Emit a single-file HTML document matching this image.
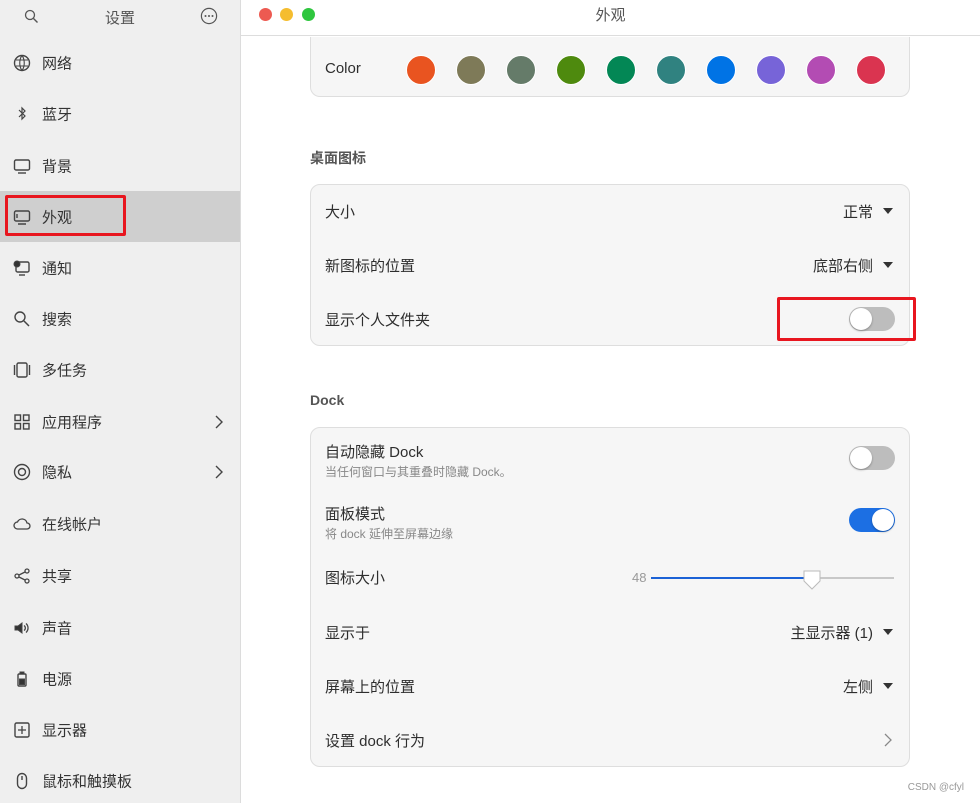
<!DOCTYPE html><html><head><meta charset="utf-8"><style>
*{box-sizing:border-box;margin:0;padding:0}
body{width:980px;height:803px;overflow:hidden;font-family:"Liberation Sans","Noto Sans CJK SC",sans-serif;background:#fff;position:relative;color:#2e2e2e}
.side{position:absolute;left:0;top:0;width:241px;height:803px;background:#efefef;border-right:1px solid #dcdcdc}
.sh{height:36px;position:relative}
.sh .t{position:absolute;left:0;width:240px;top:7px;text-align:center;font-size:15px;color:#555}
.item{position:absolute;left:0;width:240px;height:46px;font-size:15px;color:#333}
.item span{position:absolute;left:42px;top:50%;transform:translateY(-50%)}
.item svg{position:absolute;left:13px;top:50%;transform:translateY(-50%)}
.item .chev{left:auto;right:16px}
.sel{background:#cfcfcf}
.main{position:absolute;left:241px;top:0;right:0;height:803px}
.tb{position:absolute;left:0;top:0;right:0;height:36px;background:#fff;border-bottom:1px solid #ddd;text-align:center;font-size:15px;line-height:32px;color:#555}
.dot{position:absolute;top:8px;width:13px;height:13px;border-radius:50%}
.card{position:absolute;left:310px;width:600px;background:#f6f6f6;border:1px solid #dedede;border-radius:10px}
.row{position:absolute;left:14px;right:14px;font-size:15px;color:#2e2e2e}
.sub{font-size:12px;color:#888;margin-top:1px}
.h{position:absolute;left:310px;font-size:14px;font-weight:bold;color:#555}
.dd{position:absolute;right:16px;font-size:15px}
.dd:after{content:"";display:inline-block;margin-left:10px;border:5px solid transparent;border-top:6px solid #333;border-bottom:0;vertical-align:3px}
.sw{position:absolute;right:14px;width:46px;height:24px;border-radius:12px;background:#bdbdbd}
.sw:before{content:"";position:absolute;left:1px;top:1px;width:22px;height:22px;border-radius:50%;background:#fff;box-shadow:0 1px 2px rgba(0,0,0,.3)}
.sw.on{background:#1c6fe3}.sw.on:before{left:23px}
.c{position:absolute;top:55px;width:30px;height:30px;border-radius:50%;border:1.5px solid #fff}
.red{position:absolute;border:3px solid #e8161f;border-radius:2px}
.item svg *{stroke:#444}
</style></head><body>
<div class="side">
<div class="sh">
<svg style="position:absolute;left:24px;top:9px" width="15" height="15" viewBox="0 0 15 15"><circle cx="6" cy="6" r="4.5" fill="none" stroke="#555" stroke-width="1.3"/><path d="M9.5 9.5L13.5 13.5" stroke="#555" stroke-width="1.4"/></svg>
<div class="t">设置</div>
<svg style="position:absolute;left:200px;top:7px" width="18" height="18" viewBox="0 0 18 18"><circle cx="9" cy="9" r="7.6" fill="none" stroke="#555" stroke-width="1.2"/><circle cx="5.5" cy="9" r="1" fill="#555"/><circle cx="9" cy="9" r="1" fill="#555"/><circle cx="12.5" cy="9" r="1" fill="#555"/></svg>
</div>
<div class="item" style="top:40px"><svg width="18" height="18" viewBox="0 0 18 18"><circle cx="9" cy="9" r="7.5" fill="none" stroke="#333" stroke-width="1.4"/><path d="M3 6h12M3 12h12M9 1.5c-3 4-3 11 0 15M9 1.5c3 4 3 11 0 15" stroke="#333" fill="none" stroke-width="1.1"/></svg><span>网络</span></div>
<div class="item" style="top:91px"><svg width="18" height="18" viewBox="0 0 18 18"><path d="M6 5l6 6-3 3V3l3 3-6 6" fill="none" stroke="#333" stroke-width="1.2"/></svg><span>蓝牙</span></div>
<div class="item" style="top:143px"><svg width="18" height="18" viewBox="0 0 18 18"><rect x="1.5" y="3" width="15" height="10" rx="1.5" fill="none" stroke="#333" stroke-width="1.4"/><path d="M5 16h8" stroke="#333" stroke-width="1.4"/></svg><span>背景</span></div>
<div class="item sel" style="top:191px;height:51px"><svg width="18" height="18" viewBox="0 0 18 18"><rect x="1.5" y="3" width="15" height="10" rx="1.5" fill="none" stroke="#333" stroke-width="1.4"/><path d="M5 16h8M4 6v4" stroke="#333" stroke-width="1.4"/></svg><span>外观</span></div>
<div class="item" style="top:245px"><svg width="18" height="18" viewBox="0 0 18 18"><rect x="3" y="3" width="13" height="10" rx="1.5" fill="none" stroke="#333" stroke-width="1.4"/><circle cx="4" cy="5" r="3" fill="#333"/><path d="M6 16h6" stroke="#333" stroke-width="1.4"/></svg><span>通知</span></div>
<div class="item" style="top:296px"><svg width="18" height="18" viewBox="0 0 18 18"><circle cx="7" cy="7" r="5" fill="none" stroke="#333" stroke-width="1.4"/><path d="M11 11l5 5" stroke="#333" stroke-width="1.5"/></svg><span>搜索</span></div>
<div class="item" style="top:347px"><svg width="18" height="18" viewBox="0 0 18 18"><rect x="4" y="2" width="10" height="14" rx="1.5" fill="none" stroke="#333" stroke-width="1.4"/><path d="M1.5 4v10M16.5 4v10" stroke="#333" stroke-width="1.4"/></svg><span>多任务</span></div>
<div class="item" style="top:399px"><svg width="18" height="18" viewBox="0 0 18 18"><g fill="none" stroke="#333" stroke-width="1.4"><rect x="2" y="2" width="5.5" height="5.5"/><rect x="10.5" y="2" width="5.5" height="5.5"/><rect x="2" y="10.5" width="5.5" height="5.5"/><rect x="10.5" y="10.5" width="5.5" height="5.5"/></g></svg><span>应用程序</span><svg class="chev" width="10" height="14" viewBox="0 0 10 14"><path d="M2 1l6 6-6 6" fill="none" stroke="#444" stroke-width="1.4"/></svg></div>
<div class="item" style="top:449px"><svg width="18" height="18" viewBox="0 0 18 18"><circle cx="9" cy="9" r="7.5" fill="none" stroke="#333" stroke-width="1.4"/><circle cx="9" cy="9" r="3.5" fill="none" stroke="#333" stroke-width="1.4"/></svg><span>隐私</span><svg class="chev" width="10" height="14" viewBox="0 0 10 14"><path d="M2 1l6 6-6 6" fill="none" stroke="#444" stroke-width="1.4"/></svg></div>
<div class="item" style="top:501px"><svg width="18" height="18" viewBox="0 0 18 18"><path d="M4.5 14a3.5 3.5 0 0 1 0-7 5 5 0 0 1 9.5 1 3 3 0 0 1 0 6z" fill="none" stroke="#333" stroke-width="1.3"/></svg><span>在线帐户</span></div>
<div class="item" style="top:553px"><svg width="18" height="18" viewBox="0 0 18 18"><g fill="none" stroke="#333" stroke-width="1.3"><circle cx="4" cy="9" r="2"/><circle cx="14" cy="4" r="2"/><circle cx="14" cy="14" r="2"/><path d="M6 8l6-3M6 10l6 3"/></g></svg><span>共享</span></div>
<div class="item" style="top:605px"><svg width="18" height="18" viewBox="0 0 18 18"><path d="M2 7h3l4-3v10l-4-3H2z" fill="#333"/><path d="M11 6.5a3 3 0 0 1 0 5M13 4.5a6 6 0 0 1 0 9" fill="none" stroke="#333" stroke-width="1.3"/></svg><span>声音</span></div>
<div class="item" style="top:656px"><svg width="18" height="18" viewBox="0 0 18 18"><rect x="5" y="4" width="8" height="12" rx="1" fill="none" stroke="#333" stroke-width="1.4"/><rect x="7" y="2" width="4" height="2" fill="#333"/><rect x="6.5" y="9" width="5" height="5.5" fill="#333"/></svg><span>电源</span></div>
<div class="item" style="top:707px"><svg width="18" height="18" viewBox="0 0 18 18"><rect x="2" y="2" width="14" height="14" rx="1.5" fill="none" stroke="#333" stroke-width="1.4"/><path d="M9 5v8M5 9h8" stroke="#333" stroke-width="1.3"/></svg><span>显示器</span></div>
<div class="item" style="top:758px"><svg width="18" height="18" viewBox="0 0 18 18"><rect x="4.5" y="1.5" width="9" height="15" rx="4.5" fill="none" stroke="#333" stroke-width="1.4"/><path d="M9 4v4" stroke="#333" stroke-width="1.4"/></svg><span>鼠标和触摸板</span></div>
<div class="red" style="left:5px;top:195px;width:121px;height:41px"></div>
</div>
<div class="main"><div class="tb">外观
<span class="dot" style="left:18px;background:#ed5a51"></span><span class="dot" style="left:39px;background:#f5bd2f"></span><span class="dot" style="left:61px;background:#2fc63f"></span></div></div>

<div class="card" style="top:37px;height:60px;border-top:none;border-radius:0 0 10px 10px">
<div class="row" style="top:23px">Color</div>
</div>
<div class="c" style="left:406px;background:#e95420"></div>
<div class="c" style="left:456px;background:#7e7a58"></div>
<div class="c" style="left:506px;background:#657b69"></div>
<div class="c" style="left:556px;background:#4e8a0e"></div>
<div class="c" style="left:606px;background:#038755"></div>
<div class="c" style="left:656px;background:#308280"></div>
<div class="c" style="left:706px;background:#0073e5"></div>
<div class="c" style="left:756px;background:#7764d8"></div>
<div class="c" style="left:806px;background:#b34cb3"></div>
<div class="c" style="left:856px;background:#da3450"></div>

<div class="h" style="top:148px">桌面图标</div>
<div class="card" style="top:184px;height:162px">
<div class="row" style="top:16px">大小<span class="dd" style="top:0;right:2px">正常</span></div>
<div class="row" style="top:70px">新图标的位置<span class="dd" style="top:0;right:2px">底部右侧</span></div>
<div class="row" style="top:124px">显示个人文件夹</div>
<div class="sw" style="top:122px"></div>
</div>
<div class="red" style="left:777px;top:297px;width:139px;height:44px"></div>

<div class="h" style="top:392px">Dock</div>
<div class="card" style="top:427px;height:340px">
<div class="row" style="top:13px">自动隐藏 Dock<div class="sub">当任何窗口与其重叠时隐藏 Dock。</div></div>
<div class="sw" style="top:18px"></div>
<div class="row" style="top:75px">面板模式<div class="sub">将 dock 延伸至屏幕边缘</div></div>
<div class="sw on" style="top:80px"></div>
<div class="row" style="top:139px">图标大小</div>
<div style="position:absolute;left:321px;top:142px;font-size:13px;color:#999">48</div>
<div style="position:absolute;left:340px;top:149px;width:160px;height:2px;background:#1c62d6"></div>
<div style="position:absolute;left:500px;top:149px;width:83px;height:2px;background:#c8c8c8"></div>
<svg style="position:absolute;left:491px;top:142px" width="20" height="20" viewBox="0 0 20 20"><path d="M2 1h16v10l-8 8-8-8z" fill="#fff" stroke="#bbb"/></svg>
<div class="row" style="top:194px">显示于<span class="dd" style="top:0;right:2px">主显示器 (1)</span></div>
<div class="row" style="top:248px">屏幕上的位置<span class="dd" style="top:0;right:2px">左侧</span></div>
<div class="row" style="top:302px">设置 dock 行为</div>
<svg style="position:absolute;right:16px;top:305px" width="10" height="14" viewBox="0 0 10 14"><path d="M2 1l6 6-6 6" fill="none" stroke="#888" stroke-width="1.3"/></svg>
</div>
<div style="position:absolute;right:16px;top:782px;font-size:10px;color:#999">CSDN @cfyl</div>
</body></html>
